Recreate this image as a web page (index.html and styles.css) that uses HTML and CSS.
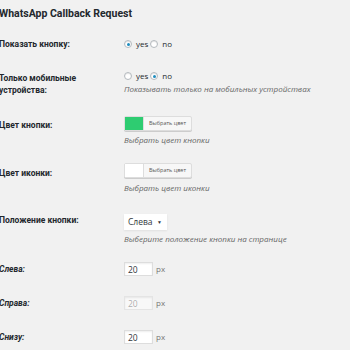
FILE: index.html
```html
<!DOCTYPE html>
<html lang="ru">
<head>
  <meta charset="UTF-8" />
  <title>WhatsApp Callback Request</title>
  <link rel="stylesheet" href="styles.css">
</head>
<body>

  <div class="wrap">
    <h2>WhatsApp Callback Request</h2>

    <form class="settings">

      <div class="row row-show">
        <div class="label">Показать кнопку:</div>
        <div class="field">
          <div class="radios">
            <label class="radio"><input type="radio" name="show" checked> yes</label>
            <label class="radio"><input type="radio" name="show"> no</label>
          </div>
        </div>
      </div>

      <div class="row row-mobile">
        <div class="label">Только мобильные устройства:</div>
        <div class="field">
          <div class="radios">
            <label class="radio"><input type="radio" name="mobile"> yes</label>
            <label class="radio"><input type="radio" name="mobile" checked> no</label>
          </div>
          <p class="description">Показывать только на мобильных устройствах</p>
        </div>
      </div>

      <div class="row row-color">
        <div class="label">Цвет кнопки:</div>
        <div class="field">
          <button type="button" class="color-btn"><span class="swatch green"></span><span class="color-text">Выбрать цвет</span></button>
          <p class="description">Выбрать цвет кнопки</p>
        </div>
      </div>

      <div class="row row-icon">
        <div class="label">Цвет иконки:</div>
        <div class="field">
          <button type="button" class="color-btn"><span class="swatch white"></span><span class="color-text">Выбрать цвет</span></button>
          <p class="description">Выбрать цвет иконки</p>
        </div>
      </div>

      <div class="row row-position">
        <div class="label">Положение кнопки:</div>
        <div class="field">
          <div class="select">Слева <span class="arrow">▼</span></div>
          <p class="description">Выберите положение кнопки на странице</p>
        </div>
      </div>

      <div class="row row-offset first-offset">
        <div class="label sub">Слева:</div>
        <div class="field inline">
          <input type="text" class="small-input" value="20"> <span class="unit">px</span>
        </div>
      </div>

      <div class="row row-offset">
        <div class="label sub">Справа:</div>
        <div class="field inline">
          <input type="text" class="small-input" value="20" disabled> <span class="unit">px</span>
        </div>
      </div>

      <div class="row row-offset">
        <div class="label sub">Снизу:</div>
        <div class="field inline">
          <input type="text" class="small-input" value="20"> <span class="unit">px</span>
        </div>
      </div>

    </form>
  </div>

</body>
</html>
```

FILE: styles.css
```css
body {
  margin: 0;
  background-color: #f1f1f1;
  color: #23282d;
  font-family: "Open Sans", "Noto Sans", sans-serif;
  font-size: 8px;
  line-height: 12px;
}

.wrap {
  margin-left: -1px;
}

h2 {
  font-family: Roboto, "Open Sans", sans-serif;
  font-size: 10.5px;
  line-height: 12px;
  font-weight: bold;
  margin: 8px 0 0 0;
}

.settings {
  display: flex;
  flex-direction: column;
  margin-top: 18px;
}

.row {
  display: grid;
  grid-template-columns: 125px 1fr;
  align-items: start;
}

.row-mobile { margin-top: 20px; }
.row-color { margin-top: 20px; }
.row-icon { margin-top: 17px; }
.row-position { margin-top: 20px; }
.row-offset { margin-top: 20px; }
.row-offset.first-offset { margin-top: 17px; }

.label {
  font-family: Roboto, "Open Sans", sans-serif;
  font-weight: bold;
  font-size: 8.5px;
  line-height: 12px;
  width: 100px;
}

.label.sub {
  font-style: italic;
}

.row-mobile .label { padding-top: 2px; }
.row-color .label { padding-top: 3px; }
.row-icon .label { padding-top: 4px; }
.row-offset .label { padding-top: 1px; }

.radios {
  display: flex;
  align-items: center;
  height: 12px;
}

.radio {
  display: flex;
  align-items: center;
  gap: 4px;
  margin-right: 2px;
  line-height: 12px;
}

.radio input {
  appearance: none;
  width: 8px;
  height: 8px;
  margin: 0;
  border: 1px solid #b4b9be;
  border-radius: 50%;
  background: #fff;
  box-shadow: inset 0 1px 1px rgba(0, 0, 0, 0.1);
  display: grid;
  place-items: center;
}

.radio input:checked::before {
  content: "";
  width: 3px;
  height: 3px;
  border-radius: 50%;
  background: #1e8cbe;
}

.description {
  margin: 1px 0 0 0;
  font-style: italic;
  color: #666;
  line-height: 12px;
}

.row-color .description,
.row-position .description {
  margin-top: 3px;
}

.row-icon .description {
  margin-top: 4px;
}

.color-btn {
  display: flex;
  height: 15px;
  box-sizing: border-box;
  padding: 0;
  border: 1px solid #ddd;
  border-radius: 2px;
  background: #f7f7f7;
  box-shadow: 0 1px 0 #ccc;
  font-family: inherit;
  cursor: pointer;
}

.swatch {
  width: 18px;
  height: 100%;
}

.swatch.green { background: #2ecc71; }
.swatch.white { background: #fff; }

.color-text {
  width: 47px;
  border-left: 1px solid #ddd;
  font-size: 5.5px;
  line-height: 13px;
  color: #555;
}

.select {
  display: flex;
  align-items: center;
  height: 16px;
  width: 43px;
  box-sizing: border-box;
  padding: 0 5px 0 4px;
  background: #fff;
  box-shadow: 0 1px 2px rgba(0, 0, 0, 0.07);
  font-size: 8.5px;
  color: #32373c;
}

.arrow {
  margin-left: auto;
  font-size: 5px;
}

.inline {
  display: flex;
  align-items: center;
  gap: 3px;
}

.small-input {
  width: 29px;
  height: 14px;
  box-sizing: border-box;
  margin: 0;
  padding: 0 3px;
  border: 1px solid #ddd;
  background: #fff;
  box-shadow: inset 0 1px 2px rgba(0, 0, 0, 0.07);
  font-family: inherit;
  font-size: 8.5px;
  color: #32373c;
}

.small-input:disabled {
  background: rgba(255, 255, 255, 0.5);
  border-color: rgba(222, 222, 222, 0.75);
  color: rgba(51, 51, 51, 0.4);
}

.unit {
  color: #777;
}
```
